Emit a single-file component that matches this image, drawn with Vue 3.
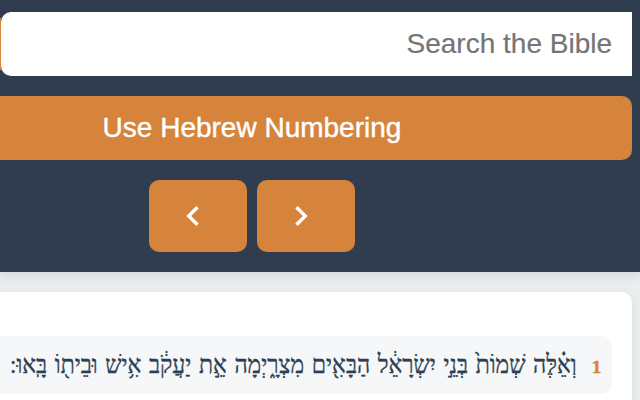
<script setup>
const verses = [
  { number: 1, text: 'וְאֵ֗לֶּה שְׁמוֹת֙ בְּנֵ֣י יִשְׂרָאֵ֔ל הַבָּאִ֖ים מִצְרָ֑יְמָה אֵ֣ת יַעֲקֹ֔ב אִ֥ישׁ וּבֵית֖וֹ בָּֽאוּ:' }
]
</script>

<template>
  <div class="page">
    <header class="toolbar">
      <div class="search">
        <div class="search-edge"></div>
        <input class="search-input" type="text" placeholder="Search the Bible" />
      </div>
      <button class="numbering"><span>Use Hebrew Numbering</span></button>
      <nav class="pager">
        <button class="step" aria-label="Previous">
          <svg width="14" height="20" viewBox="0 0 14 20"><path d="M11.5 1.2 2.7 10 11.5 18.8" /></svg>
        </button>
        <button class="step" aria-label="Next">
          <svg width="14" height="20" viewBox="0 0 14 20"><path d="M2.5 1.2 11.3 10 2.5 18.8" /></svg>
        </button>
      </nav>
    </header>
    <main class="chapter">
      <p v-for="v in verses" :key="v.number" class="verse" dir="rtl">
        <span class="number">{{ v.number }}</span>
        <span class="text">{{ v.text }}</span>
      </p>
    </main>
  </div>
</template>

<style>
body { background: #eaeeef; }
</style>

<style scoped>
.page {
  height: 400px;
  overflow: hidden;
  background: #eaeeef;
  font-family: "Liberation Sans", Arial, sans-serif;
}
.page * { box-sizing: border-box; }
.toolbar {
  height: 272px;
  padding: 12px 8px 20px 0;
  display: flex;
  flex-direction: column;
  gap: 20px;
  background: #303d4f;
  box-shadow: 0 4px 10px rgba(0, 0, 0, 0.1);
}
.search { display: flex; height: 64px; }
.search-edge {
  width: 12px;
  height: 64px;
  margin-right: -11px;
  background: linear-gradient(90deg, #d6843c 1px, transparent 1px) 0 6px / 100% 52px no-repeat;
}
.search-input {
  flex: 1;
  min-width: 0;
  height: 64px;
  padding: 0 20px;
  border: 0;
  border-radius: 10px 0 0 10px;
  background: #fff;
  font: 28px "Liberation Sans", Arial, sans-serif;
  text-align: right;
  outline: none;
}
.search-input::placeholder { color: #757575; opacity: 1; -webkit-text-stroke: 0.2px #757575; }
button {
  border: 0;
  padding: 0;
  background: #d6843c;
  color: #fff;
}
.numbering {
  height: 64px;
  padding-right: 128px;
  border-radius: 0 10px 10px 0;
  font: 28px "Liberation Sans", Arial, sans-serif;
  -webkit-text-stroke: 0.4px #fff;
}
.pager { display: flex; gap: 10px; padding-left: 149px; }
.step {
  display: flex;
  align-items: center;
  width: 98px;
  height: 72px;
  padding-left: 36.5px;
  border-radius: 10px;
}
.step svg { fill: none; stroke: #fff; stroke-width: 3.4; }
.chapter {
  height: 180px;
  margin: 20px 8px 0 0;
  padding: 44px 20px 0 0;
  background: #fff;
  border-radius: 0 10px 0 0;
  box-shadow: 0 4px 12px rgba(0, 0, 0, 0.08);
}
.verse {
  display: flex;
  align-items: center;
  height: 58px;
  margin: 0;
  padding-right: 10px;
  background: #f5f7f9;
  border-radius: 0 10px 10px 0;
  font-family: "Liberation Serif", serif;
  color: #2c3e50;
  white-space: nowrap;
}
.number {
  flex: none;
  width: 25px;
  padding-top: 3px;
  font: bold 17px "DejaVu Serif Condensed", "DejaVu Serif", serif;
  color: #d6843c;
  -webkit-text-stroke: 0.3px #d6843c;
}
.text {
  flex: none;
  font-size: 26px;
  word-spacing: 2.15px;
  transform: scaleX(0.883);
  transform-origin: right center;
  -webkit-text-stroke: 0.35px #2c3e50;
}
</style>
